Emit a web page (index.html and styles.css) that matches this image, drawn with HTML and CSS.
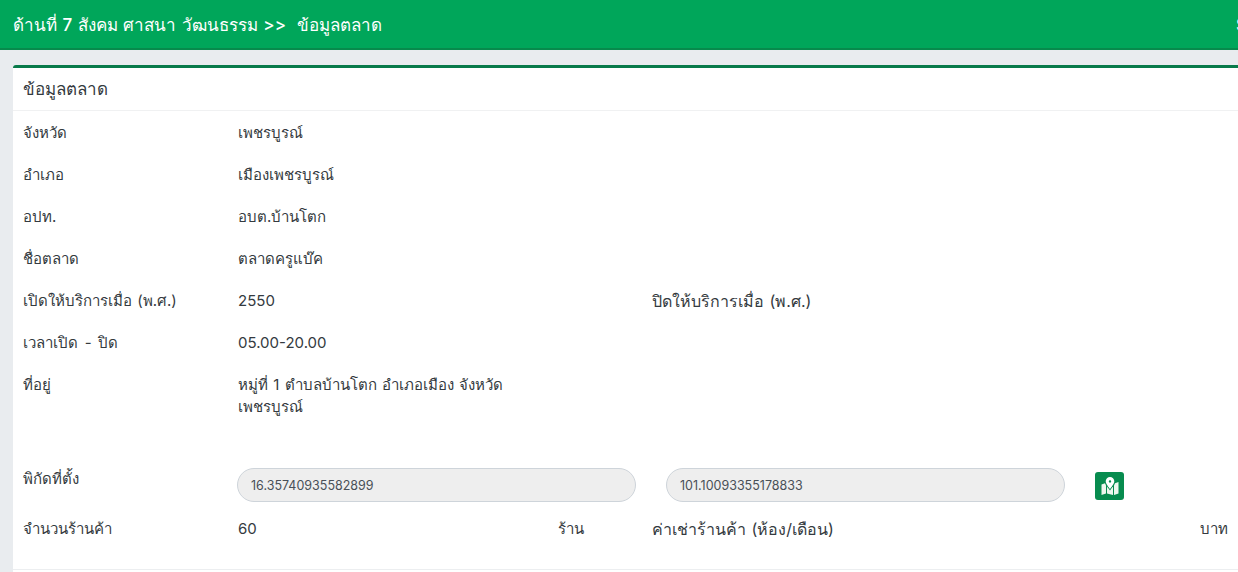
FILE: index.html
```html
<!DOCTYPE html>
<html lang="th">
<head>
<meta charset="utf-8">
<title>ข้อมูลตลาด</title>
<link rel="stylesheet" href="styles.css">
</head>
<body>
<header class="topbar">
  <h1 class="topbar-title">ด้านที่ 7 สังคม ศาสนา วัฒนธรรม &gt;&gt;&nbsp; ข้อมูลตลาด</h1>
  <span class="topbar-user">S</span>
</header>
<main class="content">
  <section class="card">
    <div class="card-head">ข้อมูลตลาด</div>
    <div class="card-body">
      <div class="row"><div>จังหวัด</div><div>เพชรบูรณ์</div></div>
      <div class="row"><div>อำเภอ</div><div>เมืองเพชรบูรณ์</div></div>
      <div class="row"><div>อปท.</div><div>อบต.บ้านโตก</div></div>
      <div class="row"><div>ชื่อตลาด</div><div>ตลาดครูแบ๊ค</div></div>
      <div class="row"><div>เปิดให้บริการเมื่อ (พ.ศ.)</div><div>2550</div><div class="wide-text">ปิดให้บริการเมื่อ (พ.ศ.)</div></div>
      <div class="row"><div class="spaced">เวลาเปิด - ปิด</div><div>05.00-20.00</div></div>
      <div class="row row-address"><div>ที่อยู่</div><div class="address">หมู่ที่ 1 ตำบลบ้านโตก อำเภอเมือง จังหวัดเพชรบูรณ์</div></div>
      <div class="row row-geo">
        <div class="geo-label">พิกัดที่ตั้ง</div>
        <input class="geo-input geo-first" value="16.35740935582899" readonly>
        <div class="geo-right">
          <input class="geo-input" value="101.10093355178833" readonly>
          <button class="map-btn" type="button" aria-label="แผนที่">
            <svg viewBox="0 0 20 20" width="20" height="20">
              <path class="map-fold" d="M1.5 8.5 5 7.2 6 9.5v8l-4.500 1.500zM14 9.500l1-2.300 3.500-1.200v11.500L14 19zM7 10.500l3 4 2.500-3.500.5 0v8l-6-1.500z"/>
              <path class="map-pin" fill-rule="evenodd" d="M10 1a4.300 4.300 0 0 0-4.300 4.300c0 2.400 2.900 6 4.300 7.700 1.400-1.700 4.300-5.300 4.300-7.700A4.300 4.300 0 0 0 10 1zm0 3.200a1.200 1.200 0 1 1 0 2.400 1.200 1.200 0 0 1 0-2.400z"/>
            </svg>
          </button>
        </div>
      </div>
      <div class="row row-shops">
        <div>จำนวนร้านค้า</div>
        <div class="pair"><span>60</span><span>ร้าน</span></div>
        <div class="pair pair-wide"><span class="wide-text">ค่าเช่าร้านค้า (ห้อง/เดือน)</span><span>บาท</span></div>
      </div>
    </div>
    <div class="card-foot"></div>
  </section>
</main>
</body>
</html>
```
FILE: styles.css
```css
* { box-sizing: border-box; }
html, body { height: 100%; }
body {
  margin: 0;
  overflow: hidden;
  background: #e9ecef;
  color: #343a40;
  font-family: "Inter", "Noto Sans", "DejaVu Sans", sans-serif;
  font-size: 15px;
  line-height: 22px;
  word-spacing: 1px;
}
.topbar {
  display: flex;
  align-items: center;
  justify-content: space-between;
  height: 50px;
  padding: 1px 0 0 13px;
  background: #00a65a;
  border-bottom: 2px solid #078a4c;
  color: #fff;
  overflow: hidden;
}
.topbar-title { margin: 0; font-size: 17px; font-weight: 500; }
.topbar-user { width: 2px; overflow: hidden; font-size: 17px; font-weight: 500; }
.content { padding: 15px 0 0 13px; }
.card {
  width: 1240px;
  background: #fff;
  border-top: 3px solid #087a4a;
  border-radius: 3px 0 0 0;
}
.card-head {
  height: 43px;
  padding: 10px 10px 0;
  border-bottom: 1px solid #f0f1f2;
  font-size: 17px;
}
.card-body { height: 458px; padding: 11px 10px 0; }
.card-foot { height: 10px; border-top: 1px solid #eceef0; }
.row {
  display: grid;
  grid-template-columns: 215px 414px 1fr;
  height: 42px;
}
.row-address { height: 94px; }
.address { width: 290px; }
.spaced { word-spacing: 2.5px; }
.wide-text { font-size: 16px; }
.row-geo {
  height: 50px;
  align-items: start;
}
.geo-input {
  display: block;
  width: 399px;
  height: 34px;
  padding: 0 13px;
  border: 1px solid #ced4da;
  border-radius: 17px;
  background: #eeeeee;
  color: #495057;
  font: 12.5px/1 "Inter", "Noto Sans", sans-serif;
}
.geo-first { margin-left: -1px; }
.geo-right {
  display: flex;
  align-items: center;
  gap: 30px;
  padding-left: 14px;
}
.map-btn {
  display: flex;
  align-items: center;
  justify-content: center;
  width: 29px;
  height: 28px;
  margin-top: 2px;
  padding: 0;
  border: 0;
  border-radius: 3px;
  background: #078c4f;
}
.map-fold { fill: #eef7ee; }
.map-pin { fill: #fff; }
.pair {
  display: flex;
  justify-content: space-between;
  width: 346px;
}
.pair-wide { width: 576px; }
```
